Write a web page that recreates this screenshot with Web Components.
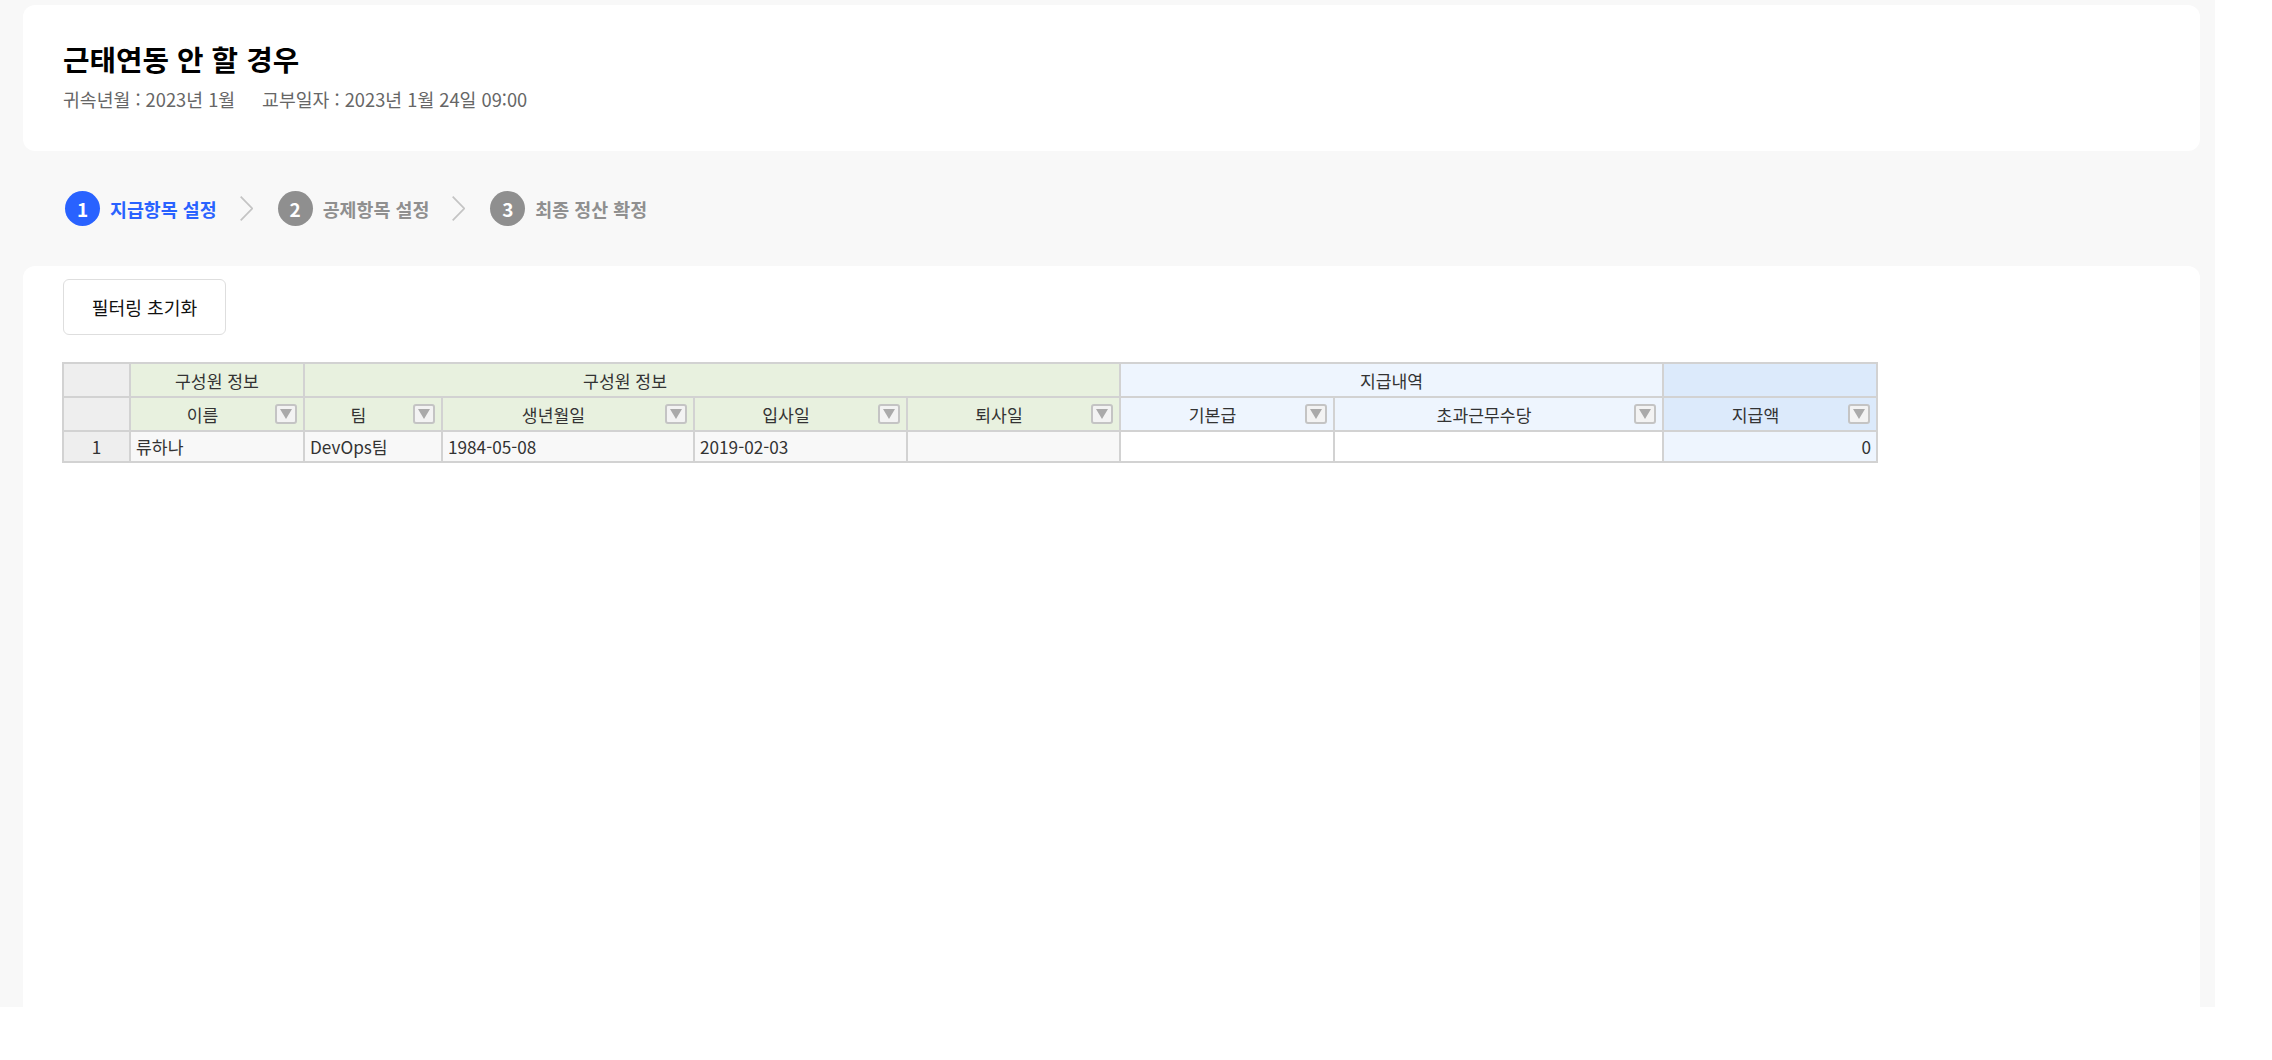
<!DOCTYPE html>
<html lang="ko">
<head>
<meta charset="utf-8">
<title>근태연동 안 할 경우</title>
<style>
  html, body { margin: 0; background: #fff; }
  body { font-family: "Noto Sans CJK KR", "Noto Sans", sans-serif; }
</style>
</head>
<body>
<settlement-page>
  <page-card slot="head" kind="head">
    <h-title>근태연동 안 할 경우</h-title>
    <h-meta>
      <span>귀속년월 : 2023년 1월</span>
      <span>교부일자 : 2023년 1월 24일 09:00</span>
    </h-meta>
  </page-card>
  <step-bar slot="steps">
    <step-item num="1" active>지급항목 설정</step-item>
    <step-item num="2" arrow>공제항목 설정</step-item>
    <step-item num="3" arrow>최종 정산 확정</step-item>
  </step-bar>
  <page-card slot="body" kind="body">
    <reset-button>필터링 초기화</reset-button>
    <pay-grid></pay-grid>
  </page-card>
</settlement-page>

<script>
class SettlementPage extends HTMLElement {
  constructor () {
    super()
    this.attachShadow({ mode: 'open' }).innerHTML = `
      <style>
        :host {
          display: flex;
          flex-direction: column;
          width: 2215px;
          height: 1007px;
          padding: 5px 15px 0 23px;
          box-sizing: border-box;
          background: #f8f8f8;
          overflow: hidden;
        }
        .steps { display: block; height: 115px; }
      </style>
      <slot name="head"></slot>
      <div class="steps"><slot name="steps"></slot></div>
      <slot name="body"></slot>
    `
  }
}

class PageCard extends HTMLElement {
  constructor () {
    super()
    this.attachShadow({ mode: 'open' }).innerHTML = `
      <style>
        :host {
          display: block;
          background: #fff;
          border-radius: 12px;
          box-sizing: border-box;
          padding-left: 40px;
        }
        :host([kind="head"]) { height: 146px; padding-top: 34px; }
        :host([kind="body"]) { flex: 1; padding-top: 13px; border-radius: 12px 12px 0 0; }
      </style>
      <slot></slot>
    `
  }
}

class HTitle extends HTMLElement {
  constructor () {
    super()
    this.attachShadow({ mode: 'open' }).innerHTML = `
      <style>
        :host {
          display: block;
          font-size: 28.8px;
          line-height: 40px;
          font-weight: 700;
          color: #000;
        }
      </style>
      <slot></slot>
    `
  }
}

class HMeta extends HTMLElement {
  constructor () {
    super()
    this.attachShadow({ mode: 'open' }).innerHTML = `
      <style>
        :host {
          display: flex;
          gap: 27px;
          margin-top: 7px;
          font-size: 18.3px;
          line-height: 26px;
          color: #666;
        }
      </style>
      <slot></slot>
    `
  }
}

class StepBar extends HTMLElement {
  constructor () {
    super()
    this.attachShadow({ mode: 'open' }).innerHTML = `
      <style>
        :host {
          display: flex;
          align-items: center;
          height: 115px;
          padding-left: 42px;
        }
      </style>
      <slot></slot>
    `
  }
}

class StepItem extends HTMLElement {
  constructor () {
    super()
    const num = this.getAttribute('num')
    const arrow = this.hasAttribute('arrow')
      ? `<svg class="arrow" width="13" height="25" viewBox="0 0 13 25"><path d="M0.7 0.6 L12.2 12.5 L0.7 24.4" fill="none" stroke="#c4c4c4" stroke-width="1.7"/></svg>`
      : ''
    this.attachShadow({ mode: 'open' }).innerHTML = `
      <style>
        :host {
          display: flex;
          align-items: center;
          font-size: 18.4px;
          font-weight: 700;
          color: #8f8f8f;
        }
        :host([active]) { color: #2962ff; }
        .arrow { margin: 0 25px 0 23px; }
        .num {
          width: 35px;
          height: 35px;
          border-radius: 50%;
          background: #8f8f8f;
          color: #fff;
          display: flex;
          align-items: center;
          justify-content: center;
          margin-right: 10px;
          font-size: 19px;
        }
        :host([active]) .num { background: #2962ff; }
      </style>
      ${arrow}
      <span class="num">${num}</span>
      <slot></slot>
    `
  }
}

class ResetButton extends HTMLElement {
  constructor () {
    super()
    this.attachShadow({ mode: 'open' }).innerHTML = `
      <style>
        :host {
          display: flex;
          align-items: center;
          justify-content: center;
          width: 163px;
          height: 56px;
          box-sizing: border-box;
          border: 1.5px solid #dedede;
          border-radius: 6px;
          background: #fff;
          font-size: 18.2px;
          color: #111;
          cursor: pointer;
        }
      </style>
      <slot></slot>
    `
  }
}

class FilterMark extends HTMLElement {
  constructor () {
    super()
    this.attachShadow({ mode: 'open' }).innerHTML = `
      <style>
        :host {
          position: absolute;
          right: 6px;
          top: 6px;
          width: 22px;
          height: 20px;
          box-sizing: border-box;
          border: 2px solid #c4c4c4;
          border-radius: 3px;
          background: #f3f3f3;
          display: flex;
          align-items: center;
          justify-content: center;
        }
        i {
          width: 0;
          height: 0;
          border-left: 6px solid transparent;
          border-right: 6px solid transparent;
          border-top: 10px solid #aaa;
        }
      </style>
      <i></i>
    `
  }
}
customElements.define('filter-mark', FilterMark)

class PayGrid extends HTMLElement {
  constructor () {
    super()
    const widths = [67, 174, 138, 252, 213, 213, 214, 329, 214]
    const cols = widths.map(w => `<col style="width:${w}px">`).join('')
    const head = (label, cls) => `<th class="${cls}">${label}<filter-mark></filter-mark></th>`
    this.attachShadow({ mode: 'open' }).innerHTML = `
      <style>
        :host {
          display: block;
          margin: 27px 0 0 -1px;
          font-size: 17.2px;
          color: #333;
        }
        table {
          table-layout: fixed;
          width: 1816px;
          border-collapse: separate;
          border-spacing: 0;
          border-top: 2px solid #d2d2d2;
          border-left: 2px solid #d2d2d2;
        }
        th, td {
          position: relative;
          padding: 0 5px;
          border-right: 2px solid #d2d2d2;
          border-bottom: 2px solid #d2d2d2;
          box-sizing: border-box;
          font-weight: 400;
          white-space: nowrap;
          overflow: hidden;
        }
        th { height: 34px; text-align: center; padding-right: 34px; }
        tr.groups th { padding-right: 5px; }
        tr.groups th.shifted { padding-right: 179px; }
        td { height: 31px; text-align: left; background: #f8f8f8; padding-left: 5px; }
        th.idx, td.idx { background: #eee; padding: 0 5px; text-align: center; }
        .green { background: #e8f1df; }
        .blue { background: #eef5fe; }
        .deep { background: #dceafb; }
        td.plain { background: #fff; }
        td.sum { background: #eef5fe; text-align: right; }
      </style>
      <table>
        <colgroup>${cols}</colgroup>
        <tr class="groups">
          <th class="idx"></th>
          <th class="green">구성원 정보</th>
          <th class="green shifted" colspan="4">구성원 정보</th>
          <th class="blue" colspan="2">지급내역</th>
          <th class="deep"></th>
        </tr>
        <tr>
          <th class="idx"></th>
          ${head('이름', 'green')}
          ${head('팀', 'green')}
          ${head('생년월일', 'green')}
          ${head('입사일', 'green')}
          ${head('퇴사일', 'green')}
          ${head('기본급', 'blue')}
          ${head('초과근무수당', 'blue')}
          ${head('지급액', 'deep')}
        </tr>
        <tr>
          <td class="idx">1</td>
          <td>류하나</td>
          <td>DevOps팀</td>
          <td>1984-05-08</td>
          <td>2019-02-03</td>
          <td></td>
          <td class="plain"></td>
          <td class="plain"></td>
          <td class="sum">0</td>
        </tr>
      </table>
    `
  }
}

customElements.define('settlement-page', SettlementPage)
customElements.define('page-card', PageCard)
customElements.define('h-title', HTitle)
customElements.define('h-meta', HMeta)
customElements.define('step-bar', StepBar)
customElements.define('step-item', StepItem)
customElements.define('reset-button', ResetButton)
customElements.define('pay-grid', PayGrid)
</script>
</body>
</html>
